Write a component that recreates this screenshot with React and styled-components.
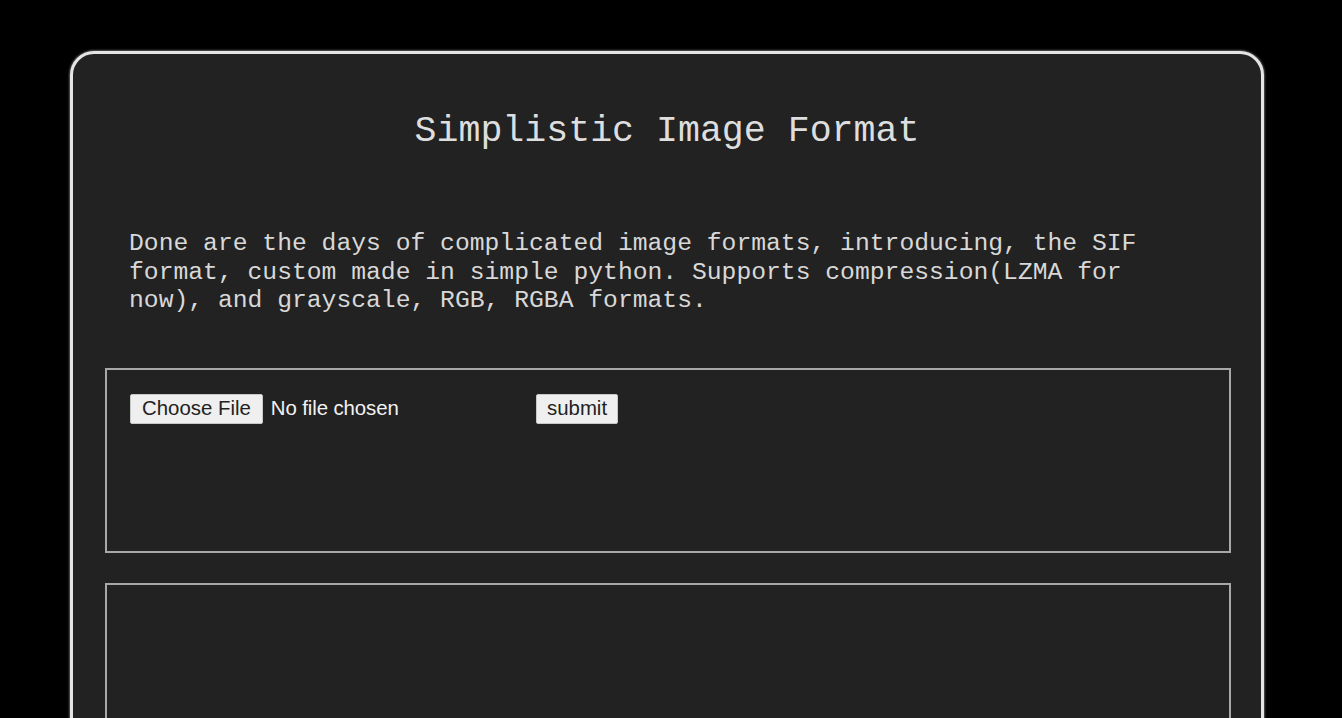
import React, { useState } from "react";
import styled, { createGlobalStyle } from "styled-components";

const GlobalStyle = createGlobalStyle`
  html, body {
    margin: 0;
    padding: 0;
    background: #000;
    overflow: hidden;
  }
`;

const Card = styled.main`
  box-sizing: border-box;
  width: 1194px;
  min-height: 760px;
  margin: 51px 0 0 70px;
  background: #222222;
  border: 3px solid #e4e4e4;
  border-radius: 24px;
  box-shadow: 0 0 2px 1px rgba(255, 255, 255, 0.35);
  padding-top: 57px;
  color: #dcdcdc;
  font-family: "Liberation Mono", "Courier New", monospace;
`;

const Title = styled.h1`
  margin: 0;
  text-align: center;
  font-size: 36.6px;
  font-weight: normal;
  line-height: 42px;
  color: #dedede;
`;

const Intro = styled.p`
  margin: 76px 0 0;
  padding: 0 56px;
  font-size: 24.7px;
  line-height: 28.5px;
  color: #d8d8d8;
`;

const Panel = styled.section`
  box-sizing: border-box;
  margin: ${(p) => p.$top}px 30px 0 32px;
  height: ${(p) => p.$height}px;
  border: 2px solid #a8a8a8;
  padding: 24px 23px;
`;

const Form = styled.form`
  display: flex;
  align-items: center;
`;

const FilePicker = styled.label`
  display: flex;
  align-items: center;
  width: 401px;
  cursor: pointer;
  input {
    display: none;
  }
`;

const Button = styled.span`
  box-sizing: border-box;
  display: inline-flex;
  align-items: center;
  height: 30px;
  padding: 0 ${(p) => p.$pad}px;
  background: #efefef;
  border: 1px solid #c8c8c8;
  border-radius: 2px;
  color: #222;
  font-family: "Liberation Sans", Arial, sans-serif;
  font-size: 20.4px;
`;

const Status = styled.span`
  margin-left: 8px;
  color: #f2f2f2;
  font-family: "Liberation Sans", Arial, sans-serif;
  font-size: 20.4px;
  letter-spacing: -0.1px;
`;

const Submit = styled(Button).attrs({ as: "button", type: "submit" })`
  margin-left: 5px;
  cursor: pointer;
`;

export default function App() {
  const [file, setFile] = useState(null);
  return (
    <>
      <GlobalStyle />
      <Card>
        <Title>Simplistic Image Format</Title>
        <Intro>
          Done are the days of complicated image formats, introducing, the SIF
          format, custom made in simple python. Supports compression(LZMA for
          now), and grayscale, RGB, RGBA formats.
        </Intro>
        <Panel $top={53} $height={185}>
          <Form onSubmit={(e) => e.preventDefault()}>
            <FilePicker>
              <input
                type="file"
                onChange={(e) => setFile(e.target.files[0] || null)}
              />
              <Button $pad={11}>Choose File</Button>
              <Status>{file ? file.name : "No file chosen"}</Status>
            </FilePicker>
            <Submit $pad={10}>submit</Submit>
          </Form>
        </Panel>
        <Panel $top={30} $height={200} />
      </Card>
    </>
  );
}
